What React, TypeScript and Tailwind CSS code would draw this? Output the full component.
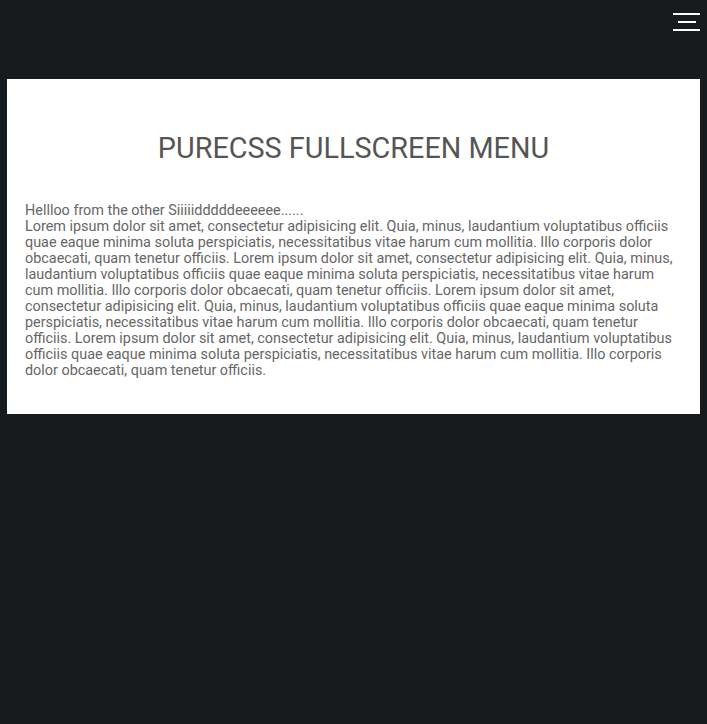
export default function App() {
  const body =
    'Lorem ipsum dolor sit amet, consectetur adipisicing elit. Quia, minus, laudantium voluptatibus officiis quae eaque minima soluta perspiciatis, necessitatibus vitae harum cum mollitia. Illo corporis dolor obcaecati, quam tenetur officiis. Lorem ipsum dolor sit amet, consectetur adipisicing elit. Quia, minus, laudantium voluptatibus officiis quae eaque minima soluta perspiciatis, necessitatibus vitae harum cum mollitia. Illo corporis dolor obcaecati, quam tenetur officiis. Lorem ipsum dolor sit amet, consectetur adipisicing elit. Quia, minus, laudantium voluptatibus officiis quae eaque minima soluta perspiciatis, necessitatibus vitae harum cum mollitia. Illo corporis dolor obcaecati, quam tenetur officiis. Lorem ipsum dolor sit amet, consectetur adipisicing elit. Quia, minus, laudantium voluptatibus officiis quae eaque minima soluta perspiciatis, necessitatibus vitae harum cum mollitia. Illo corporis dolor obcaecati, quam tenetur officiis.';

  return (
    <div className="relative min-h-[724px] bg-[#171b1e] font-['Roboto',sans-serif]">
      {/* menu toggle */}
      <button className="absolute right-[7px] top-[13px] flex w-[27px] flex-col items-center gap-[6px]">
        <span className="block h-[2px] w-[27px] bg-white" />
        <span className="block h-[2px] w-[18px] bg-white" />
        <span className="block h-[2px] w-[27px] bg-white" />
      </button>

      <div className="px-[7px] pt-[79px]">
        <div className="bg-white px-[18px] pt-[53px] pb-[35px]">
          <h1 className="text-center text-[28.8px] leading-[32px] text-[#555]">
            PURECSS FULLSCREEN MENU
          </h1>
          <p className="mt-[39px] text-[14.4px] leading-[16px] text-[#666]">
            Hellloo from the other Siiiiidddddeeeeee......
            <br />
            {body}
          </p>
        </div>
      </div>
    </div>
  );
}
